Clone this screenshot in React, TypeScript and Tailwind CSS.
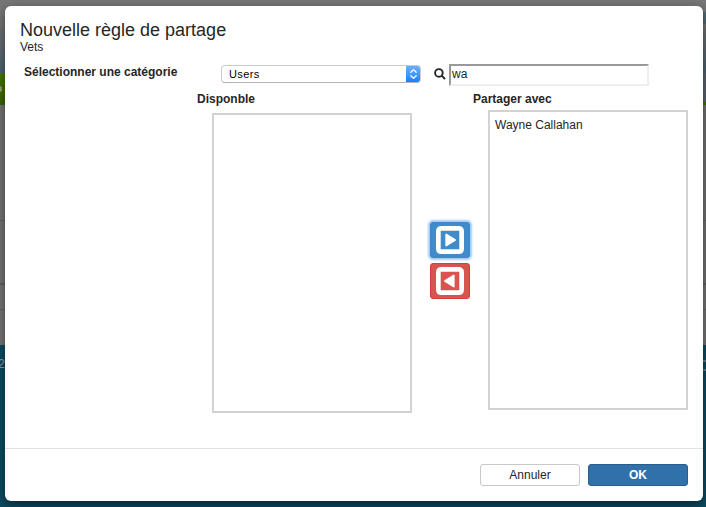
import React from "react";

function Backdrop() {
  return (
    <div className="flex h-[507px] w-[706px] flex-col overflow-hidden bg-[#747474]">
      <div className="h-[28px] shrink-0 bg-[#777777]" />
      <div className="flex h-[45px] shrink-0 justify-between bg-gradient-to-b from-[#737373] to-[#4a6472]">
        <span />
        <span className="h-3 w-[3px] -translate-y-4 bg-[#536d78]" />
      </div>
      <div className="flex h-[32px] shrink-0 justify-between">
        <div className="flex w-[350px] items-center bg-gradient-to-b from-[#477a00] to-[#3a6500]">
          <span className="h-[6px] w-[2px] rounded-r-full bg-[#969b84]" />
        </div>
        <div className="h-[32px] w-[350px] border-b-[3px] border-[#456f08] bg-[#59666d]" />
      </div>
      <div className="h-[116px] shrink-0 border-b border-[#656565] bg-[#757575]" />
      <div className="h-[64px] shrink-0 border-b-2 border-[#626262] bg-[#757575]" />
      <div className="h-[25px] shrink-0 border-b border-[#686868] bg-[#777777]" />
      <div className="h-[35px] shrink-0 bg-[#777777]" />
      <div className="flex h-[162px] shrink-0 justify-between bg-[#0d4c63] pt-[12px] text-[12px] leading-[14px] text-[#8fa5ad]">
        <span className="-ml-[2px]">2</span>
        <span className="mt-[3px] h-[11px] w-[3px] border-y-2 border-[#5d7d89]" />
      </div>
    </div>
  );
}

function SelectField() {
  return (
    <div className="mt-[9px] ml-[44px] flex h-[18px] w-[200px] shrink-0 overflow-hidden rounded-[4px] border border-[#cbcbcb] border-b-[#b3b3b3] bg-white text-[11px] leading-[17px] tracking-[0.4px] text-black">
      <span className="grow pl-[7px]">Users</span>
      <span className="-my-px -mr-px flex h-[18px] w-[15px] items-center justify-center bg-gradient-to-b from-[#6cb3fa] to-[#087dff]">
        <svg width="9" height="12" viewBox="0 0 9 12" fill="none" stroke="white" strokeWidth="1.3" strokeLinecap="round" strokeLinejoin="round">
          <path d="M1.8 4.3 4.5 1.6 7.2 4.3M1.8 7.7 4.5 10.4 7.2 7.7" />
        </svg>
      </span>
    </div>
  );
}

function MoveIcon({ left = false }: { left?: boolean }) {
  return (
    <svg width="28" height="28" viewBox="0 0 28 28">
      <path
        fill="white"
        fillRule="evenodd"
        d="M5.5 0H22.5Q28 0 28 5.5V22.5Q28 28 22.5 28H5.5Q0 28 0 22.5V5.5Q0 0 5.5 0ZM4.7 4.7V23.3H23.3V4.7Z"
      />
      {left ? (
        <path d="M17.8 8.4V19.6L8.9 14Z" fill="white" stroke="white" strokeWidth="1.7" strokeLinejoin="round" />
      ) : (
        <path d="M10.2 8.4V19.6L19.1 14Z" fill="white" stroke="white" strokeWidth="1.7" strokeLinejoin="round" />
      )}
    </svg>
  );
}

export default function App() {
  return (
    <div className="relative h-[507px] w-[706px] overflow-hidden font-['Liberation_Sans',Arial,sans-serif] text-[12px] text-[#262626]">
      <Backdrop />
      <div role="dialog" className="absolute top-[6px] left-[5px] flex h-[495px] w-[698px] flex-col rounded-[6px] bg-white shadow-[0_4px_12px_rgba(0,0,0,0.5)]">
        <header className="h-[50px] pt-[14px] pl-[15px]">
          <h1 className="w-fit text-[18px] leading-[20px] whitespace-nowrap">Nouvelle règle de partage</h1>
          <p className="text-[12px] leading-[14px]">Vets</p>
        </header>
        <div className="flex h-[32px] shrink-0 pl-[19px]">
          <label className="mt-[9px] w-[153px] leading-[14px] font-bold whitespace-nowrap">Sélectionner une catégorie</label>
          <SelectField />
          <svg className="mt-[12px] ml-[13px] shrink-0" width="12" height="12" viewBox="0 0 12 12" fill="none" stroke="#262626" strokeWidth="1.9">
            <circle cx="4.9" cy="4.9" r="3.8" />
            <path d="m7.7 7.7 2.8 2.8" strokeLinecap="round" />
          </svg>
          <div className="mt-[8px] ml-[3px] h-[22px] w-[200px] border-2 border-t-[#999999] border-r-[#eeeeee] border-b-[#eeeeee] border-l-[#999999] pl-px leading-[17px]">wa</div>
        </div>
        <main className="flex h-[360px] shrink-0 pl-[192px]">
          <section className="w-[215px]">
            <h2 className="mt-[4px] leading-[14px] font-bold">Disponble</h2>
            <div className="mt-[7px] ml-[15px] h-[300px] w-[200px] border-2 border-[#d2d2d2]" />
          </section>
          <div className="flex w-[76px] flex-col items-center pt-[134px]">
            <button aria-label="Ajouter" className="flex h-[36px] w-[40px] items-center justify-center rounded-[3px] border border-[#3b87d0] bg-[#428bca] shadow-[0_0_2px_2px_#a3ccf7]">
              <MoveIcon />
            </button>
            <button aria-label="Retirer" className="mt-[5px] flex h-[36px] w-[40px] items-center justify-center rounded-[3px] border border-[#d43f3a] bg-[#d9534f]">
              <MoveIcon left />
            </button>
          </div>
          <section className="-ml-[15px] w-[215px]">
            <h2 className="mt-[4px] leading-[14px] font-bold">Partager avec</h2>
            <div className="mt-[4px] ml-[15px] h-[300px] w-[200px] border-2 border-[#d2d2d2] pt-[6px] pl-[5px] leading-[14px]">Wayne Callahan</div>
          </section>
        </main>
        <footer className="flex h-[53px] shrink-0 justify-end gap-[8px] border-t border-[#e2e2e2] pt-[15px] pr-[15px]">
          <button className="h-[22px] w-[100px] rounded-[3px] border border-[#c8c8c8] bg-white leading-[20px]">Annuler</button>
          <button className="h-[22px] w-[100px] rounded-[3px] border border-[#285e8e] bg-[#3071a9] leading-[20px] font-bold text-white">OK</button>
        </footer>
      </div>
    </div>
  );
}
